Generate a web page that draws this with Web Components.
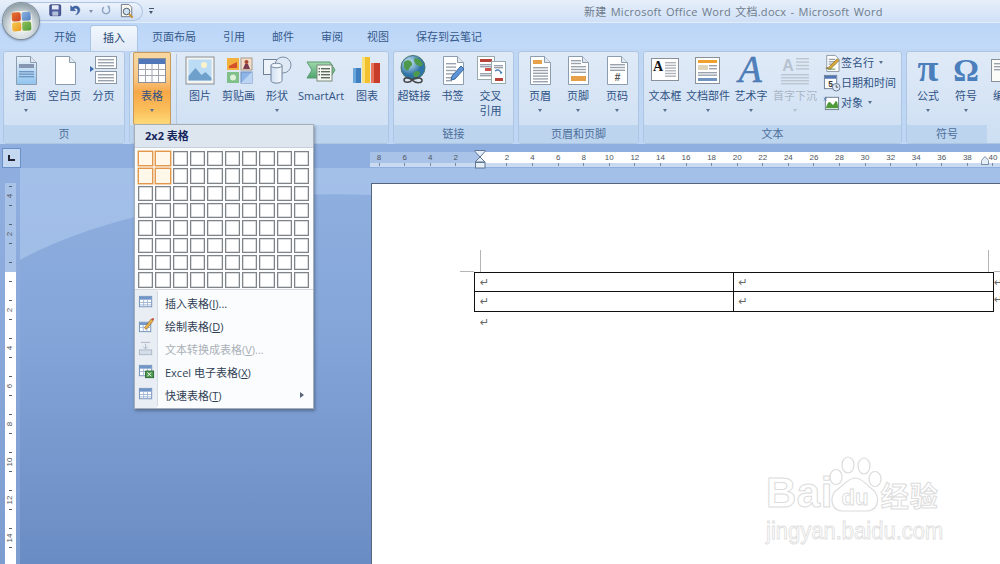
<!DOCTYPE html>
<html lang="zh">
<head>
<meta charset="utf-8">
<title>Word</title>
<style>
html,body{margin:0;height:100%;overflow:hidden}
body{position:relative;width:1000px;height:564px;font:11px "Open Sans","Noto Sans CJK SC",sans-serif;color:#2b4a78;background:#8aa9d8}
u{text-underline-offset:1px}
</style>
</head>
<body>
<word-titlebar>新建 Microsoft Office Word 文档.docx - Microsoft Word</word-titlebar>
<word-tabs>
  <word-tab>开始</word-tab><word-tab active>插入</word-tab><word-tab>页面布局</word-tab><word-tab>引用</word-tab><word-tab>邮件</word-tab><word-tab>审阅</word-tab><word-tab style="margin-left:-3px">视图</word-tab><word-tab>保存到云笔记</word-tab>
</word-tabs>
<word-ribbon>
  <ribbon-group label="页" style="width:122px;--pad:2px">
    <ribbon-button w="39" arrow><word-icon slot="icon" name="cover"></word-icon>封面</ribbon-button>
    <ribbon-button w="39"><word-icon slot="icon" name="blank"></word-icon>空白页</ribbon-button>
    <ribbon-button w="39"><word-icon slot="icon" name="pagebreak"></word-icon>分页</ribbon-button>
  </ribbon-group>
  <ribbon-group label="" style="width:260px;--pad:3px">
    <ribbon-button w="38" arrow hot><word-icon slot="icon" name="table"></word-icon>表格</ribbon-button>
    <ribbon-sep></ribbon-sep>
    <ribbon-button w="38"><word-icon slot="icon" name="picture"></word-icon>图片</ribbon-button>
    <ribbon-button w="39"><word-icon slot="icon" name="clip"></word-icon>剪贴画</ribbon-button>
    <ribbon-button w="38" arrow><word-icon slot="icon" name="shape"></word-icon>形状</ribbon-button>
    <ribbon-button w="50"><word-icon slot="icon" name="smartart"></word-icon>SmartArt</ribbon-button>
    <ribbon-button w="42"><word-icon slot="icon" name="chart"></word-icon>图表</ribbon-button>
  </ribbon-group>
  <ribbon-group label="链接" style="width:121px;--pad:1px">
    <ribbon-button w="38"><word-icon slot="icon" name="link"></word-icon>超链接</ribbon-button>
    <ribbon-button w="39"><word-icon slot="icon" name="bookmark"></word-icon>书签</ribbon-button>
    <ribbon-button w="37"><word-icon slot="icon" name="xref"></word-icon>交叉<br>引用</ribbon-button>
  </ribbon-group>
  <ribbon-group label="页眉和页脚" style="width:121px;--pad:2px">
    <ribbon-button w="38" arrow><word-icon slot="icon" name="header"></word-icon>页眉</ribbon-button>
    <ribbon-button w="38" arrow><word-icon slot="icon" name="footer"></word-icon>页脚</ribbon-button>
    <ribbon-button w="40" arrow><word-icon slot="icon" name="pagenum"></word-icon>页码</ribbon-button>
  </ribbon-group>
  <ribbon-group label="文本" style="width:259px">
    <ribbon-button w="42" arrow><word-icon slot="icon" name="textbox"></word-icon>文本框</ribbon-button>
    <ribbon-button w="44" arrow><word-icon slot="icon" name="parts"></word-icon>文档部件</ribbon-button>
    <ribbon-button w="42" arrow><word-icon slot="icon" name="wordart"></word-icon>艺术字</ribbon-button>
    <ribbon-button w="46" arrow disabled><word-icon slot="icon" name="dropcap"></word-icon>首字下沉</ribbon-button>
    <ribbon-stack>
      <ribbon-small arrow><word-icon slot="icon" name="signature" size="17"></word-icon>签名行</ribbon-small>
      <ribbon-small><word-icon slot="icon" name="date" size="17"></word-icon>日期和时间</ribbon-small>
      <ribbon-small arrow><word-icon slot="icon" name="object" size="17"></word-icon>对象</ribbon-small>
    </ribbon-stack>
  </ribbon-group>
  <ribbon-group label="符号" style="width:200px;--pad:2px;--label-w:80px">
    <ribbon-button w="38" arrow><word-icon slot="icon" name="pi"></word-icon>公式</ribbon-button>
    <ribbon-button w="38" arrow><word-icon slot="icon" name="omega"></word-icon>符号</ribbon-button>
    <ribbon-button w="38"><word-icon slot="icon" name="number"></word-icon>编号</ribbon-button>
  </ribbon-group>
</word-ribbon>
<word-workspace>
  <doc-page></doc-page>
</word-workspace>
<table-menu>
  <menu-item icon="tbl">插入表格(<u>I</u>)...</menu-item>
  <menu-item icon="draw">绘制表格(<u>D</u>)</menu-item>
  <menu-item icon="convert" disabled>文本转换成表格(<u>V</u>)...</menu-item>
  <menu-item icon="excel">Excel 电子表格(<u>X</u>)</menu-item>
  <menu-item icon="tbl" more>快速表格(<u>T</u>)</menu-item>
</table-menu>

<script>
/* ICONS */
const page = (inner, fill = '#fff') => `<path d="M5.5 1.5h14l6 6v22h-20z" fill="${fill}" stroke="#8d9db0"/><path d="M19.5 1.5v6h6" fill="#dfe6ee" stroke="#8d9db0"/>${inner}`;
const lines = (x, y, w, n, gap = 3, c = '#9aa3ad') => Array.from({length: n}, (_, i) => `<rect x="${x}" y="${y + i * gap}" width="${w}" height="1.4" fill="${c}"/>`).join('');
const ICONS = {
    cover: page(`<rect x="8" y="9" width="15" height="4" fill="#8796b0"/>${lines(8, 16, 15, 3, 2.5, '#6f97c4')}`, 'url(#cov)'),
    blank: page(''),
    pagebreak: `<path d="M1 11l4 3-4 3z" fill="#3a6db0"/><rect x="6.5" y="1.5" width="21" height="12" fill="#fff" stroke="#8a96a4"/>${lines(9, 4, 16, 3, 3)}<rect x="6.5" y="16.5" width="21" height="12" fill="#fff" stroke="#8a96a4"/>${lines(9, 19, 16, 3, 3)}`,
    table: `<rect x="1.5" y="3.5" width="27" height="24" fill="#fff" stroke="#8a8f9a"/><rect x="2" y="4" width="26" height="5" fill="#4f76b8"/><path d="M2 14.5h26M2 20.5h26M8.5 9v18M15 9v18M21.5 9v18" stroke="#a0a6b0" fill="none"/>`,
    picture: `<rect x="1" y="2" width="28" height="27" fill="#f4f4f0" stroke="#8a8f96"/><rect x="3.5" y="4.5" width="23" height="21" fill="#bcdcf5"/><circle cx="19" cy="10" r="3" fill="#fdf3c8"/><path d="M3.5 21l7-8 6 7 4-3 6 6v2.500h-23z" fill="#6f9fcb"/>`,
    clip: `<rect x="3" y="3" width="12" height="12" fill="#f2b13d"/><path d="M5 11l8-4v6H5z" fill="#d4502a"/><rect x="17" y="3" width="11" height="12" fill="#f3ddc9" stroke="#a98"/><circle cx="22.500" cy="7" r="2" fill="#a8442c"/><path d="M19 14l2-5h3l2 5z" fill="#7a3c50"/><rect x="3" y="17" width="12" height="11" fill="#7fc08a"/><circle cx="9" cy="22.500" r="3" fill="#dff0d8"/><rect x="17" y="17" width="11" height="11" fill="#8fb5e8" stroke="#6f8fc0"/><path d="M17 28l11-11v11z" fill="#bcd4f3"/>`,
    shape: `<rect x="1.500" y="4.500" width="15" height="15" fill="#eef3fa" stroke="#6e8198"/><circle cx="21" cy="10" r="8" fill="#dfe9f5" stroke="#7d90a6"/><path d="M9 10.500v15c0 3.500 11 3.500 11 0v-15z" fill="url(#cyl)" stroke="#6e8198"/><ellipse cx="14.500" cy="10.500" rx="5.500" ry="2.300" fill="#eef5fc" stroke="#6e8198"/>`,
    smartart: `<path d="M1 7h23l5 8-5 8H1l5-8z" fill="url(#grn)" stroke="#5a9a70"/><rect x="11" y="10" width="15" height="16" fill="#f6f8f4" stroke="#7a8a7a"/>${lines(15, 13, 9, 4, 3, '#5c6a5c')}<rect x="12.500" y="13" width="1.500" height="1.400" fill="#5c6a5c"/><rect x="12.500" y="16" width="1.500" height="1.400" fill="#5c6a5c"/><rect x="12.500" y="19" width="1.500" height="1.400" fill="#5c6a5c"/>`,
    chart: `<rect x="1" y="13" width="8" height="15" fill="#3f7fc0"/><rect x="1" y="13" width="3" height="15" fill="#6aa5dc"/><rect x="10" y="2" width="8" height="26" fill="#f3c02e"/><rect x="10" y="2" width="3" height="26" fill="#fae078"/><rect x="19" y="8" width="9" height="20" fill="#c83c2a"/><rect x="19" y="8" width="3" height="20" fill="#e9735a"/>`,
    link: `<circle cx="14" cy="12.500" r="12" fill="url(#glb)" stroke="#46746a"/><path d="M5 7c4-3 7-2 8 1s-2 3-3 6-4 1-5-2zM16 3c4 0 7 3 8 7-3 2-4 1-6 0s-4-5-2-7zM15 17c3-2 6-1 6 1s-3 5-5 4-2-3-1-5z" fill="#4f9a4a"/><path d="M5 25c0-3 6-3 8 0 2-3 9-3 10 0s-6 4-10 0c-2 3-8 3-8 0z" fill="none" stroke="#444" stroke-width="1.500"/>`,
    bookmark: page(`${lines(8, 8, 10, 4, 3.400)}${lines(8, 22, 6, 2, 3)}<path d="M13 25l4-1 9-10-3-3-9 10z" fill="#5f95d6" stroke="#35669f"/>`),
    xref: `<rect x="1.500" y="1.500" width="17" height="23" fill="#fff" stroke="#9aa"/><rect x="4" y="4" width="12" height="3" fill="#b6433a"/>${lines(4, 9, 12, 2, 2)}<rect x="9" y="13" width="7" height="3" fill="#c9524a"/>${lines(4, 18, 12, 2, 2)}<rect x="15.500" y="6.500" width="14" height="22" fill="#fff" stroke="#9aa"/>${lines(18, 10, 9, 2, 2)}<path d="M19 16c3-2 5-1 6 2l1-1" fill="none" stroke="#4f7fb8" stroke-width="1.500"/><rect x="19" y="23" width="8" height="3" fill="#b6433a"/>`,
    header: page(`<rect x="8" y="5" width="9" height="4" fill="#e6a04a"/>${lines(8, 12, 15, 6, 2.800)}`),
    footer: page(`${lines(8, 5, 10, 2, 2.800)}${lines(8, 11, 15, 3, 2.800)}<rect x="8" y="21" width="15" height="5" fill="#e6a04a"/>`),
    pagenum: `${page(lines(8, 9, 15, 3, 2.800))}<text x="15.500" y="26" font-family="Liberation Sans" font-weight="700" font-size="10" fill="#555" text-anchor="middle">#</text>`,
    textbox: `<rect x="1.500" y="3.500" width="27" height="22" fill="#fff" stroke="#8a9098"/><text x="8" y="16" font-family="Liberation Serif" font-weight="700" font-size="14" fill="#111" text-anchor="middle">A</text>${lines(15, 7, 11, 6, 2.700, '#b0b4ba')}`,
    parts: `<rect x="2.500" y="2.500" width="24" height="26" fill="#fff" stroke="#8a9098"/><rect x="5" y="5" width="19" height="3" fill="#efa02e"/><rect x="5" y="10" width="10" height="5" fill="#ddd6bc"/>${lines(16, 10, 8, 2, 3)}${lines(5, 17, 19, 2, 2.500)}<rect x="5" y="23" width="19" height="3" fill="#6f94c0"/>`,
    wordart: `<text x="14" y="27" font-family="Liberation Serif" font-style="italic" font-size="38" fill="#4f81bd" stroke="#3f6fa8" stroke-width=".5" text-anchor="middle">A</text>`,
    dropcap: `<text x="8" y="16" font-family="Liberation Sans" font-weight="700" font-size="16" fill="#b7c2d0" text-anchor="middle">A</text>${lines(16, 3, 13, 4, 3.400, '#bcc6d2')}${lines(1, 19, 28, 4, 3, '#bcc6d2')}`,
    pi: `<text x="15" y="26" font-family="Liberation Serif" font-weight="700" font-size="38" fill="#4a7fbc" text-anchor="middle">π</text>`,
    omega: `<text x="15" y="26" font-family="Liberation Serif" font-weight="700" font-size="32" fill="#4a7fbc" text-anchor="middle">Ω</text>`,
    number: `<rect x="2.500" y="4.500" width="27" height="22" fill="#fbfbf8" stroke="#8a9098"/>${lines(5, 8, 22, 3, 3)}`,
    signature: `<path d="M4 1.500h9l4 4v13H4z" fill="#fff" stroke="#8a96a4"/>${lines(6, 5, 7, 3, 2.500)}<path d="M3 15l3-1 9-9 2 2-9 9z" fill="#d8a83a" stroke="#7a6a30" stroke-width=".7"/><path d="M5 16h8" stroke="#5a8a3a"/>`,
    date: `<rect x="1.500" y="1.500" width="13" height="14" fill="#fff" stroke="#6e7e92"/><rect x="2" y="2" width="12" height="3" fill="#4f76b8"/><text x="8" y="14" font-family="Liberation Sans" font-weight="700" font-size="9" fill="#333" text-anchor="middle">5</text><circle cx="14" cy="14" r="4" fill="#dfe8f3" stroke="#5f7694"/><path d="M14 11.500V14h2" stroke="#333" fill="none" stroke-width=".8"/>`,
    object: `<rect x="2.500" y="3.500" width="14" height="13" fill="#fff" stroke="#6e7e92"/><path d="M3 15c2-7 4-8 6-5s3 0 4-2 3 1 3 7z" fill="#4f9a3a"/><path d="M1 4l3 3M1 7l3-3" stroke="#4f76b8"/>`,
    tbl: `<rect x="1.500" y="2.500" width="13" height="11" fill="#fff" stroke="#6f8fb8"/><rect x="2" y="3" width="12" height="3" fill="#6f94c8"/><path d="M2 9h12M2 11.500h12M6 6v7M10 6v7" stroke="#9fb6d4" fill="none"/>`,
    draw: `<rect x="1.500" y="5.500" width="12" height="10" fill="#fff" stroke="#6f8fb8"/><rect x="2" y="6" width="11" height="2.500" fill="#6f94c8"/><path d="M2 11h11M5.500 8v7M9.500 8v7" stroke="#9fb6d4" fill="none"/><path d="M7 11l1 2 2-1 6-8-2-2z" fill="#e6b24a" stroke="#8a5a20" stroke-width=".6"/><path d="M14 2l2 2 1-2-1-1z" fill="#c8392e"/>`,
    convert: `<path d="M3 2.500h10" stroke="#aeb8c4"/><path d="M8 4v5M5.500 7L8 9.500 10.500 7" stroke="#a9b8c8" fill="none"/><rect x="1.500" y="10.500" width="13" height="5" fill="#d4dde8" stroke="#aab8c8"/>`,
    excel: `<rect x="1.500" y="2.500" width="13" height="11" fill="#fff" stroke="#6f8fb8"/><rect x="2" y="3" width="12" height="3" fill="#6f94c8"/><path d="M2 9h12M6 6v7M10 6v7" stroke="#9fb6d4" fill="none"/><rect x="8" y="8.500" width="8.500" height="7" fill="#4e9a4e" stroke="#2f6a36"/><path d="M10 10l4 4M14 10l-4 4" stroke="#fff"/>`,
    save: `<rect x="1" y="1" width="13" height="13" rx="1" fill="#4f5fa0" stroke="#2e3a70"/><rect x="3.500" y="1.500" width="8" height="5" fill="#e8edf5"/><rect x="4" y="9" width="7" height="5" fill="#b6c2da"/>`,
    undo: `<path d="M2 2v6h6L5.500 5.800C8 4 11 5.500 10.500 9 10.200 11 9 12 8 13c3-.5 5-3 5-6 0-4.500-5.500-6-8.800-3z" fill="#3f66a8" stroke="#2b4a80" stroke-width=".5"/>`,
    redo: `<path d="M4 3a5 5 0 1 0 6 0" fill="none" stroke="#8fa6c4" stroke-width="2"/><path d="M8 1h4v4z" fill="#8fa6c4"/>`,
    preview: `<path d="M2.500 1.500h8l3 3v10h-11z" fill="#f6f6ee" stroke="#6a7584"/><circle cx="8" cy="9" r="3.500" fill="#cfe0f2" stroke="#4a5a6a"/><path d="M10.500 11.500l4 4" stroke="#c8902e" stroke-width="2"/>`
};
const DEFS = `<defs>
<linearGradient id="cov" x1="0" y1="0" x2="0" y2="1"><stop offset="0" stop-color="#eef3f8"/><stop offset="1" stop-color="#8fc4ef"/></linearGradient>
<linearGradient id="cyl" x1="0" y1="0" x2="1" y2="0"><stop offset="0" stop-color="#cfdff2"/><stop offset="1" stop-color="#f6fafd"/></linearGradient>
<linearGradient id="grn" x1="0" y1="0" x2="0" y2="1"><stop offset="0" stop-color="#9fd8ab"/><stop offset="1" stop-color="#4ea56e"/></linearGradient>
<radialGradient id="glb" cx=".35" cy=".3"><stop offset="0" stop-color="#cfeaf6"/><stop offset="1" stop-color="#2f74a8"/></radialGradient>
</defs>`;

/* COMPONENTE WORD ICON */
class WordIcon extends HTMLElement {
    connectedCallback() {
        const size = this.getAttribute('size') || 30;
        const box = this.getAttribute('name').match(/^(signature|date|object|tbl|draw|convert|excel|save|undo|redo|preview)$/) ? 18 : 30;
        this.attachShadow({mode: 'open'}).innerHTML = `
        <style>:host{display:block;width:${size}px;height:${size}px}svg{display:block;width:100%;height:100%;overflow:visible}</style>
        <svg viewBox="0 0 ${box} ${box}">${DEFS}${ICONS[this.getAttribute('name')]}</svg>`;
    }
}
customElements.define('word-icon', WordIcon);

/* COMPONENTE TITLE BAR */
class WordTitlebar extends HTMLElement {
    connectedCallback() {
        this.attachShadow({mode: 'open'}).innerHTML = `
        <style>
            :host{display:flex;align-items:center;height:23px;box-sizing:border-box;background:linear-gradient(#e6effb,#d0e0f6);position:relative;border-bottom:1px solid #e3edf9}
            .orb{position:absolute;left:3px;top:3px;width:36px;height:36px;border-radius:50%;background:radial-gradient(circle at 50% 65%,#f6f8f6 0,#d8dfe2 40%,#98a6ae 72%,#6f7d86 100%);box-shadow:0 0 0 1px #7f8e9a,0 1px 3px #5a6a7a;display:grid;place-items:center;z-index:2}
            .logo{display:grid;grid-template-columns:9px 9px;gap:1px;padding:1px;border-radius:5px;background:#f3efe2;transform:rotate(-3deg)}
            .logo i{display:block;height:9px;border-radius:2px}
            .qat{display:flex;align-items:center;gap:5px;height:19px;box-sizing:border-box;margin-left:25px;width:118px;padding-left:24px;border-radius:0 11px 11px 0;background:linear-gradient(#edf3fc,#cddef5);border:1px solid #aec4e2;border-left:0}
            .qat word-icon{flex:none}
            .drop{width:0;height:0;border:2.500px solid transparent;border-top:3px solid #7b8da8;border-bottom:0;margin:0 3px 0 0}
            .more{margin-left:6px;width:5px;border-top:1px solid #43556e;height:6px;position:relative}
            .more::after{content:"";position:absolute;left:0;top:2px;border:2.500px solid transparent;border-top:3px solid #43556e;border-bottom:0}
            .title{position:absolute;left:584px;top:4px;line-height:16px;color:#6f7c8c;font-size:11px;font-family:"Open Sans","Noto Sans CJK SC",sans-serif;white-space:nowrap;word-spacing:1px;letter-spacing:.28px}
        </style>
        <div class="orb"><div class="logo"><i style="background:linear-gradient(135deg,#e8762c,#c9402a)"></i><i style="background:linear-gradient(135deg,#8fb4e2,#4f7fc0)"></i><i style="background:linear-gradient(135deg,#f6c64a,#ea9a26)"></i><i style="background:linear-gradient(135deg,#8fc25a,#4f9a3c)"></i></div></div>
        <div class="qat">
            <word-icon name="save" size="15"></word-icon>
            <word-icon name="undo" size="15"></word-icon><span class="drop"></span>
            <word-icon name="redo" size="13"></word-icon>
            <word-icon name="preview" size="17"></word-icon>
        </div>
        <span class="more"></span>
        <span class="title"><slot></slot></span>`;
    }
}
customElements.define('word-titlebar', WordTitlebar);

/* COMPONENTE TABS */
class WordTabs extends HTMLElement {
    connectedCallback() {
        this.attachShadow({mode: 'open'}).innerHTML = `
        <style>:host{display:flex;height:26px;gap:1px;padding-left:41px;box-sizing:border-box;background:linear-gradient(#bcd6f8,#c2daf9)}</style>
        <slot></slot>`;
    }
}
customElements.define('word-tabs', WordTabs);

class WordTab extends HTMLElement {
    connectedCallback() {
        this.attachShadow({mode: 'open'}).innerHTML = `
        <style>
            :host{display:block;padding:4px 13px 0;line-height:20px;color:#355a8c;font-size:11px;white-space:nowrap;height:22px}
            :host([active]){background:linear-gradient(#f2f7fd,#dfe9f7);border:1px solid #aac4e4;border-bottom:0;border-radius:3px 3px 0 0;margin-top:2px;height:23px;padding:2px 12px 0;color:#24446f;position:relative;z-index:1}
        </style>
        <slot></slot>`;
    }
}
customElements.define('word-tab', WordTab);

/* COMPONENTE RIBBON */
class WordRibbon extends HTMLElement {
    connectedCallback() {
        this.attachShadow({mode: 'open'}).innerHTML = `
        <style>:host{display:flex;gap:4px;height:96px;box-sizing:border-box;padding:2px 0 0 3px;overflow:hidden;background:#bfd7f5;border-bottom:1px solid #8fb0dc}</style>
        <slot></slot>`;
    }
}
customElements.define('word-ribbon', WordRibbon);

class RibbonGroup extends HTMLElement {
    connectedCallback() {
        this.attachShadow({mode: 'open'}).innerHTML = `
        <style>
            :host{display:block;flex:none;height:93px;box-sizing:border-box;border:1px solid #adc6e4;border-radius:3px;background:linear-gradient(#e0eaf7,#cddff3)}
            .body{display:flex;height:73px;box-sizing:border-box;padding-left:var(--pad,0)}
            .name{height:18px;line-height:17px;text-align:center;color:#4c6f9c;background:#bdd4ee;font-size:11px;width:var(--label-w,auto)}
        </style>
        <div class="body"><slot></slot></div>
        <div class="name">${this.getAttribute('label')}</div>`;
    }
}
customElements.define('ribbon-group', RibbonGroup);

class RibbonButton extends HTMLElement {
    connectedCallback() {
        this.attachShadow({mode: 'open'}).innerHTML = `
        <style>
            :host{display:flex;flex-direction:column;align-items:center;flex:none;width:${this.getAttribute('w')}px;height:73px;box-sizing:border-box;padding-top:3px;font-size:11px;line-height:15px;text-align:center;white-space:nowrap;color:#2f5385}
            :host([hot]){background:linear-gradient(#f7d8a0 0,#f8c98a 35%,#f7a748 55%,#fbbf5c 80%,#ffdc7c 100%);box-shadow:inset 0 0 0 1px #c79a5a;border-radius:2px}
            :host([disabled]){color:#a9b6c6}
            .icon{height:33px}
            .arrow{width:0;height:0;border:2.500px solid transparent;border-top:3px solid #59708e;border-bottom:0;margin-top:6px}
            :host([disabled]) .arrow{border-top-color:#b4bfcc}
        </style>
        <div class="icon"><slot name="icon"></slot></div>
        <div><slot></slot></div>
        ${this.hasAttribute('arrow') ? '<div class="arrow"></div>' : ''}`;
    }
}
customElements.define('ribbon-button', RibbonButton);

class RibbonSep extends HTMLElement {
    connectedCallback() {
        this.attachShadow({mode: 'open'}).innerHTML = `
        <style>:host{display:block;width:1px;height:70px;margin:2px 4px 2px 5px;background:#b4c9e2;flex:none}</style>`;
    }
}
customElements.define('ribbon-sep', RibbonSep);

class RibbonStack extends HTMLElement {
    connectedCallback() {
        this.attachShadow({mode: 'open'}).innerHTML = `
        <style>:host{display:flex;flex-direction:column;margin-left:5px}</style><slot></slot>`;
    }
}
customElements.define('ribbon-stack', RibbonStack);

class RibbonSmall extends HTMLElement {
    connectedCallback() {
        this.attachShadow({mode: 'open'}).innerHTML = `
        <style>
            :host{display:flex;align-items:center;gap:1px;height:20px;font-size:11px;color:#2f5385;white-space:nowrap}
            .arrow{width:0;height:0;border:2.500px solid transparent;border-top:3px solid #59708e;border-bottom:0;margin-left:4px}
        </style>
        <slot name="icon"></slot><slot></slot>${this.hasAttribute('arrow') ? '<div class="arrow"></div>' : ''}`;
    }
}
customElements.define('ribbon-small', RibbonSmall);

/* COMPONENTE TABLE MENU */
class TableMenu extends HTMLElement {
    connectedCallback() {
        let cells = '';
        for (let r = 0; r < 8; r++) for (let c = 0; c < 10; c++) cells += `<i class="${r < 2 && c < 2 ? 'on' : ''}"></i>`;
        this.attachShadow({mode: 'open'}).innerHTML = `
        <style>
            :host{position:absolute;left:134px;top:124px;width:180px;box-sizing:border-box;border:1px solid #a6aeb8;background:#fbfcfd;box-shadow:1px 2px 3px rgba(40,50,70,.45);color:#33445c;z-index:5}
            .head{height:22px;line-height:22px;padding-left:10px;font-weight:700;font-size:11px;color:#16265c;background:#dde6ef;border-bottom:1px solid #c6d0dc}
            .grid{display:grid;grid-template-columns:repeat(10,15.300px);gap:2.050px;padding:3px 0 0 3px;height:142px;box-sizing:border-box;align-content:start;border-bottom:1px solid #d4d8de}
            .grid i{display:block;height:15.300px;box-sizing:border-box;background:#fff;border:1px solid #808488;box-shadow:inset 0 0 0 .5px #b8babc}
            .grid i.on{border-color:#e2974e;background:#fff8ea;box-shadow:0 0 0 .5px #eba860}
            .items{padding:1px 0 2px;background:linear-gradient(90deg,#e9eef4 22px,transparent 22px)}
        </style>
        <div class="head">2x2 表格</div>
        <div class="grid">${cells}</div>
        <div class="items"><slot></slot></div>`;
    }
}
customElements.define('table-menu', TableMenu);

class MenuItem extends HTMLElement {
    connectedCallback() {
        this.attachShadow({mode: 'open'}).innerHTML = `
        <style>
            :host{display:flex;align-items:center;height:23px;font-size:11px;color:#303f55;position:relative;white-space:nowrap}
            :host([disabled]){color:#aab0b8}
            .ico{width:22px;height:23px;display:grid;place-items:center;background:#e9eef4;border-right:1px solid #d3dae2;flex:none}
            .txt{padding-left:7px}
            .more{margin-left:auto;margin-right:9px;width:0;height:0;border:3.500px solid transparent;border-left:4px solid #5a6676;border-right:0}
        </style>
        <div class="ico"><word-icon name="${this.getAttribute('icon')}" size="17"></word-icon></div>
        <div class="txt"><slot></slot></div>
        ${this.hasAttribute('more') ? '<div class="more"></div>' : ''}`;
    }
}
customElements.define('menu-item', MenuItem);

/* COMPONENTE WORKSPACE */
class WordWorkspace extends HTMLElement {
    connectedCallback() {
        this.attachShadow({mode: 'open'}).innerHTML = `
        <style>
            :host{display:grid;position:relative;grid-template-columns:370px 1fr;grid-template-rows:38px 1fr;height:419px;overflow:hidden;background:linear-gradient(#8fafe0 0,#8fafe0 8%,#84a5d8 45%,#6a8cc4 100%)}
            .wave{position:absolute;left:0;top:0;width:1000px;height:419px}
            .corner{grid-area:1/1;position:relative;height:38px}
            .tabstop{position:absolute;left:2px;top:3px;width:19px;height:20px;box-sizing:border-box;border:1px solid #6a90c8;background:#c4d8f2;display:grid;place-items:center}
            .tabstop i{display:block;width:5px;height:4px;border-left:2px solid #223;border-bottom:2px solid #223}
            .side{grid-area:2/1;padding-left:5px;position:relative}
            h-ruler{grid-area:1/2;margin-top:7px}
            .main{grid-area:2/2;padding-left:1px;min-width:0;position:relative}
        </style>
        <svg class="wave" viewBox="0 0 1000 419"><path d="M20 23H1000V50H372C250 45 110 65 20 115z" fill="#b4cdf0" opacity=".55"/><rect width="20" height="419" fill="#8facdc" opacity=".5"/></svg>
        <div class="corner"><div class="tabstop"><i></i></div></div>
        <h-ruler></h-ruler>
        <div class="side"><v-ruler></v-ruler></div>
        <div class="main"><slot></slot></div>`;
    }
}
customElements.define('word-workspace', WordWorkspace);

class HRuler extends HTMLElement {
    connectedCallback() {
        const cell = n => `<span class="c"><b>${n}</b><i></i></span>`;
        const right = [];
        for (let n = 2; n <= 40; n += 2) right.push(cell(n));
        this.attachShadow({mode: 'open'}).innerHTML = `
        <style>
            :host{display:block;position:relative;height:16px;z-index:1}
            .row{display:flex;height:15px;background:linear-gradient(#fff 0,#fff 11px,#c9daf1 11px,#c9daf1 15px)}
            .left{display:flex;flex:none;justify-content:flex-end;width:111.400px;padding-right:12.800px;box-sizing:border-box;background:linear-gradient(#a9c3e8 0,#a9c3e8 11px,#c9daf1 11px)}
            .right{display:flex;padding-left:12.800px}
            .c{flex:none;width:25.580px;display:flex;flex-direction:column;align-items:center;font:8px/11px "Liberation Sans",sans-serif;color:#4e5560}
            .c b{font-weight:400}
            .c i{width:1px;height:3px;background:#7d8ba0;margin-top:0}
            .stop{position:absolute;left:104px;top:-2px;width:13px;height:19px}
            .end{position:absolute;left:611px;top:3px;width:8px;height:11px}
        </style>
        <div class="row"><div class="left">${[8, 6, 4, 2].map(cell).join('')}</div><div class="right">${right.join('')}</div></div>
        <svg class="stop" viewBox="0 0 13 19"><path d="M1 .5h10v1L6 7l5 5H1l5-5-5-5.500z" fill="#e6eef8" stroke="#5f7694"/><rect x="1.500" y="12.500" width="9.500" height="5.500" fill="#e6eef8" stroke="#5f7694"/></svg>
        <svg class="end" viewBox="0 0 10 11"><path d="M.5 10.500v-5L5 .5l4.500 5v5z" fill="#e6eef8" stroke="#5f7694"/></svg>`;
    }
}
customElements.define('h-ruler', HRuler);

class VRuler extends HTMLElement {
    connectedCallback() {
        const cell = n => `<div class="c"><i></i><b>${n}</b><i></i></div>`;
        this.attachShadow({mode: 'open'}).innerHTML = `
        <style>
            :host{display:block;width:11px;height:381px;overflow:hidden;font:8px/8px "Liberation Sans",sans-serif;color:#4e5560}
            .top{display:flex;flex-direction:column;justify-content:flex-end;height:89px;background:#a9c3e8}
            .bot{background:#fff;height:292px}
            .c{flex:none;height:38px;box-sizing:border-box;padding:9px 0;display:flex;flex-direction:column;align-items:center;justify-content:space-between}
            .c b{font-weight:400;transform:rotate(-90deg)}
            i{display:block;width:3px;height:1px;background:#55606e}
            .half{flex:none;height:19px;display:grid;place-items:center}
        </style>
        <div class="top">${cell(4)}${cell(2)}<div class="half"><i></i></div></div>
        <div class="bot"><div class="half"><i></i></div>${[2, 4, 6, 8, 10, 12, 14].map(cell).join('')}</div>`;
    }
}
customElements.define('v-ruler', VRuler);

/* COMPONENTE PAGE */
class DocPage extends HTMLElement {
    connectedCallback() {
        const mark = '<span class="m">↵</span>';
        this.attachShadow({mode: 'open'}).innerHTML = `
        <style>
            :host{display:block;position:relative;height:381px;box-sizing:border-box;background:#fff;border-top:1px solid #56657c;border-left:1px solid #56657c;padding:66px 0 0 102px}
            .crop{display:flex;justify-content:space-between;width:509px;height:22px;margin-left:6px}
            .crop i{display:block;width:1px;height:22px;background:#b5b5b5}
            .tick{position:absolute;top:87px;left:88px;width:14px;height:1px;background:#b5b5b5}
            .tick.r{left:622px;width:8px}
            .tbl{display:grid;grid-template-columns:258.500px 1fr;grid-template-rows:19px 19px;width:520px;box-sizing:border-box;border:1.500px solid #111;position:relative}
            .tbl div{box-sizing:border-box;padding:0 0 0 5px;line-height:17px}
            .tbl .l{border-right:1.500px solid #111}
            .tbl .t{border-bottom:1.500px solid #111}
            .m{font:11px/17px "DejaVu Sans",sans-serif;color:#666}
            .after{margin:0 0 0 6px;line-height:19px}
            .ends{position:absolute;left:622px;top:90px;display:flex;flex-direction:column;line-height:19px}
            .wm{position:absolute;left:394px;top:271px;color:#fff;-webkit-text-stroke:1px #dcdcdc;font-family:"Liberation Sans",sans-serif;pointer-events:none}
            .wm-row{display:flex;align-items:flex-end;height:60px}
            .bai{font:700 42px/43px "Liberation Sans",sans-serif;letter-spacing:.5px;margin-bottom:1px}
            .paw{width:57px;height:60px;margin:0 -2px 0 -6px;flex:none}
            .jy{font:700 28px/34px "Noto Sans CJK SC",sans-serif;margin-left:-1px;margin-bottom:3px;letter-spacing:1px}
            .url{font:400 22px/26px "Liberation Sans",sans-serif;margin-top:2px;white-space:nowrap;-webkit-text-stroke:.8px #e0e0e0;transform:scaleY(1.1);transform-origin:left top}
        </style>
        <div class="crop"><i></i><i></i></div>
        <span class="tick"></span><span class="tick r"></span>
        <div class="tbl">
            <div class="l t">${mark}</div><div class="t">${mark}</div>
            <div class="l">${mark}</div><div>${mark}</div>
        </div>
        <div class="ends">${mark}${mark}</div>
        <div class="after">${mark}</div>
        <div class="wm">
            <div class="wm-row">
                <span class="bai">Bai</span>
                <svg class="paw" viewBox="0 0 57 60">
                    <g fill="#fff" stroke="#dcdcdc" stroke-width="1.200">
                        <ellipse cx="9" cy="22" rx="6" ry="7.500"/><ellipse cx="21" cy="10" rx="6" ry="8"/><ellipse cx="37" cy="11" rx="6" ry="8"/><ellipse cx="48" cy="24" rx="6" ry="7.500"/>
                        <path d="M28 23c7 0 12 7 17 11 8 6 8 21-5 22H15C3 55 2 40 11 34c6-4 10-11 17-11z"/>
                    </g>
                    <text x="28" y="50" font-family="Liberation Sans" font-weight="700" font-size="22" text-anchor="middle" fill="#fff" stroke="#dcdcdc" stroke-width=".9">du</text>
                </svg>
                <span class="jy">经验</span>
            </div>
            <div class="url">jingyan.baidu.com</div>
        </div>`;
    }
}
customElements.define('doc-page', DocPage);
</script>
</body>
</html>
